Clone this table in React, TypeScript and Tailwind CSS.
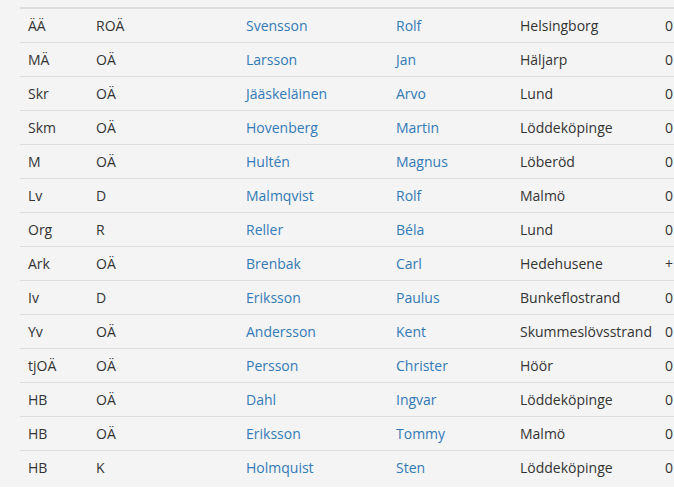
import React from 'react';

const rows = [
  ['ÄÄ', 'ROÄ', 'Svensson', 'Rolf', 'Helsingborg', '0'],
  ['MÄ', 'OÄ', 'Larsson', 'Jan', 'Häljarp', '0'],
  ['Skr', 'OÄ', 'Jääskeläinen', 'Arvo', 'Lund', '0'],
  ['Skm', 'OÄ', 'Hovenberg', 'Martin', 'Löddeköpinge', '0'],
  ['M', 'OÄ', 'Hultén', 'Magnus', 'Löberöd', '0'],
  ['Lv', 'D', 'Malmqvist', 'Rolf', 'Malmö', '0'],
  ['Org', 'R', 'Reller', 'Béla', 'Lund', '0'],
  ['Ark', 'OÄ', 'Brenbak', 'Carl', 'Hedehusene', '+'],
  ['Iv', 'D', 'Eriksson', 'Paulus', 'Bunkeflostrand', '0'],
  ['Yv', 'OÄ', 'Andersson', 'Kent', 'Skummeslövsstrand', '0'],
  ['tjOÄ', 'OÄ', 'Persson', 'Christer', 'Höör', '0'],
  ['HB', 'OÄ', 'Dahl', 'Ingvar', 'Löddeköpinge', '0'],
  ['HB', 'OÄ', 'Eriksson', 'Tommy', 'Malmö', '0'],
  ['HB', 'K', 'Holmquist', 'Sten', 'Löddeköpinge', '0'],
];

export default function App() {
  return (
    <div className="w-[674px] h-[502px] overflow-hidden bg-white" style={{ fontFamily: '"Open Sans", sans-serif' }}>
      <div className="bg-[#f4f4f4] pt-[7px] pb-[3px] pl-[20px]">
        <table className="w-[900px] table-fixed border-collapse border-t-2 border-[#dddddd] text-[14px] text-[#333333]">
          <colgroup>
            <col className="w-[68px]" />
            <col className="w-[150px]" />
            <col className="w-[150px]" />
            <col className="w-[124px]" />
            <col className="w-[145px]" />
            <col />
          </colgroup>
          <tbody>
            {rows.map((r, i) => (
              <tr key={i} className={i < rows.length - 1 ? 'h-[34px] border-b border-[#dddddd]' : 'h-[34px]'}>
                <td className="px-2 pt-[1px] whitespace-nowrap">{r[0]}</td>
                <td className="px-2 pt-[1px] whitespace-nowrap">{r[1]}</td>
                <td className="px-2 pt-[1px] whitespace-nowrap">
                  <a href="#" className="text-[#337ab7]">{r[2]}</a>
                </td>
                <td className="px-2 pt-[1px] whitespace-nowrap">
                  <a href="#" className="text-[#337ab7]">{r[3]}</a>
                </td>
                <td className="px-2 pt-[1px] whitespace-nowrap">{r[4]}</td>
                <td className="px-2 pt-[1px] whitespace-nowrap">{r[5]}</td>
              </tr>
            ))}
          </tbody>
        </table>
      </div>
    </div>
  );
}
